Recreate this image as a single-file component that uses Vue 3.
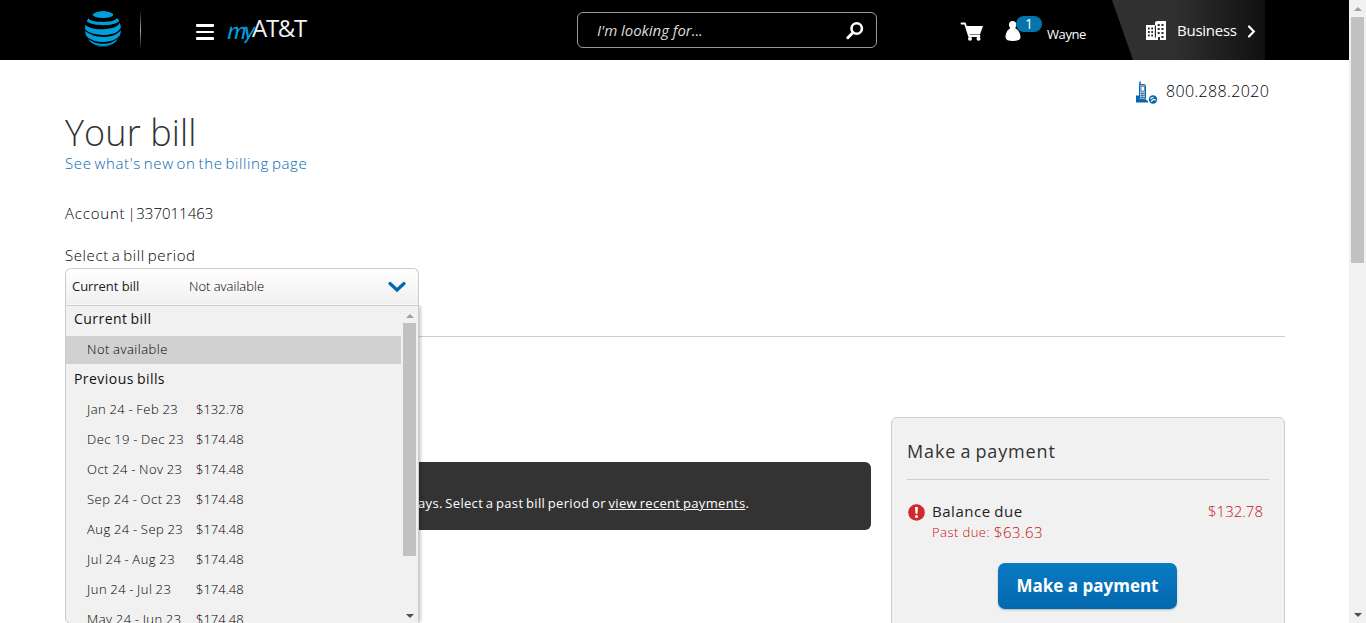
<script setup>
const bills = [
  ['Jan 24 - Feb 23', '$132.78'],
  ['Dec 19 - Dec 23', '$174.48'],
  ['Oct 24 - Nov 23', '$174.48'],
  ['Sep 24 - Oct 23', '$174.48'],
  ['Aug 24 - Sep 23', '$174.48'],
  ['Jul 24 - Aug 23', '$174.48'],
  ['Jun 24 - Jul 23', '$174.48'],
  ['May 24 - Jun 23', '$174.48'],
]
</script>

<template>
  <div class="window">
    <div class="page">
      <header class="top">
        <svg class="globe" width="38" height="38" viewBox="0 0 38 38">
          <defs><clipPath id="ball"><circle cx="19" cy="19" r="18" /></clipPath></defs>
          <g clip-path="url(#ball)" fill="#009fdb">
            <ellipse cx="19" cy="4.500" rx="10.500" ry="3.500" />
            <path d="M5 7C3.500 9.500 8 11.300 15 11.800C25 12.500 34 10.500 33 7L38 7L35 11.500C29 16.500 9 16.300 3 11.500L2 8Z" />
            <path d="M0 13C2 17.500 10 19.600 19 19.200C28 18.900 35 16.500 36 12L38 15C36 21.500 30 24.500 21 24.900C12 25.300 3 22.500 0 18Z" />
            <path d="M0 20C6 25.500 13 27.300 21 26.900C29 26.500 35 23.500 38 18.500L37 24C33 29.500 28 31.500 20 32C12 32.300 5 29.500 1 25Z" />
            <path d="M4 28.500C9 33 15 34 21 33.700C27 33.500 32 31 35 27L32 32C27 35.500 22 36.200 18 36C12 35.700 8 34 5 31Z" />
            <path d="M9 34.500C14 37.300 24 37.500 29 34.500L27 37Q19 39 11 37Z" />
          </g>
        </svg>
        <i class="rule" />
        <div class="burger"><i /><i /><i /></div>
        <div class="brand"><span class="my">my</span><span class="att">AT&amp;T</span></div>
        <div class="search">
          <span>I'm looking for...</span>
          <svg width="20" height="20" viewBox="0 0 20 20" fill="none" stroke="#fff">
            <circle cx="11.700" cy="8.500" r="5.200" stroke-width="2.600" />
            <path d="M8 12.500L2.800 17.700" stroke-width="3" stroke-linecap="round" />
          </svg>
        </div>
        <svg class="cart" width="24" height="20" viewBox="0 0 24 20">
          <path d="M1.500 1.500H5L9 14H19.500" fill="none" stroke="#fff" stroke-width="1.800" stroke-linecap="round" stroke-linejoin="round" />
          <path d="M6 4H23L20 12.500H8.500Z" fill="#fff" />
          <circle cx="10" cy="16.700" r="2" fill="#fff" /><circle cx="18.500" cy="16.700" r="2" fill="#fff" />
        </svg>
        <div class="user">
          <svg width="16" height="21" viewBox="0 0 16 21" fill="#fff">
            <path d="M7.500 0C10 0 11.500 1.500 11.300 4C11.200 5.500 10 7 10.500 7.500C14 9 15.500 13 15.500 16.500Q15 20 8 20Q1 20 .5 16.500C.5 13 2 9 5 7.500C5.500 7 4 5.500 3.900 4C3.800 1.500 5.300 0 7.500 0Z" />
          </svg>
          <b class="badge">1</b>
        </div>
        <span class="name">Wayne</span>
        <div class="business">
          <svg width="21" height="20" viewBox="0 0 21 20">
            <path d="M0 4H9V1L11 0H20V19H14V16H12V19H0Z" fill="#fff" />
            <path d="M2 6.500h1.700v2H2zM5.300 6.500H7v2H5.300zM2 10h1.700v2H2zM5.300 10H7v2H5.300zM2 13.500h1.700v2H2zM5.300 13.500H7v2H5.300zM8.800 4.500h1.200v12h-1.200zM11.700 3h2v2h-2zM15.500 3h2v2h-2zM11.700 7h2v2h-2zM15.500 7h2v2h-2zM11.700 11h2v2h-2zM15.500 11h2v2h-2zM15.500 15h2v2h-2z" fill="#292929" />
          </svg>
          <span>Business</span>
          <svg class="chev" width="9" height="14" viewBox="0 0 9 14"><path d="M2 2.500L6.800 7.500L2 12.500" fill="none" stroke="#fff" stroke-width="2.200" stroke-linecap="round" /></svg>
        </div>
      </header>

      <main>
        <div class="phone">
          <svg width="23" height="23" viewBox="0 0 23 23">
            <path d="M1 14.500H4V18H10L13 20V21.500H1V18Z" fill="#0568ae" />
            <path d="M4.500 5Q4.500 3.500 6 3.500H9.500Q10.500 3.500 10.500 5V17Q10.500 18.500 7.500 18.500Q4.500 18.500 4.500 17Z" fill="#b9b3c4" stroke="#0568ae" />
            <path d="M5 .5V4" stroke="#0568ae" stroke-width="1.500" />
            <path d="M6 5.500H9.500V10H6Z" fill="#fff" stroke="#1772b6" stroke-width=".7" />
            <path d="M6 12.500h3.500M6 14.500h3.500M6 16.500h3.500" stroke="#0568ae" stroke-dasharray="1 .3" />
            <circle cx="18" cy="18.500" r="4.200" fill="#0568ae" />
            <path d="M16 20.500L18.500 18.500L21 19M15.500 18Q16.500 16.300 18.500 16.300" stroke="#fff" stroke-width="1.200" fill="none" />
          </svg>
          <span>800.288.2020</span>
        </div>
        <h1>Your bill</h1>
        <a class="new">See what's new on the billing page</a>
        <p class="account"><span>Account</span><span>|</span><span class="number">337011463</span></p>
        <p class="label">Select a bill period</p>
        <div class="picker">
          <div class="selected">
            <span class="cur">Current bill</span><span class="na">Not available</span>
            <svg width="18" height="12" viewBox="0 0 18 12"><path d="M2 2.500L9 9L16 2.500" fill="none" stroke="#0568ae" stroke-width="3.200" stroke-linecap="round" /></svg>
          </div>
          <div class="menu">
            <div class="options">
              <div class="group">Current bill</div>
              <div class="option active"><span class="period">Not available</span></div>
              <div class="group prev">Previous bills</div>
              <div v-for="b in bills" :key="b[0]" class="option"><span class="period">{{ b[0] }}</span><span class="amount">{{ b[1] }}</span></div>
            </div>
            <div class="bar inner"><i class="up" /><i class="thumb" /><i class="down" /></div>
          </div>
        </div>
        <hr />
        <div class="columns">
          <div class="notice"><p>ays. Select a past bill period or <u>view recent payments</u>.</p></div>
          <section class="pay">
            <h2>Make a payment</h2>
            <div class="balance">
              <svg width="17" height="17" viewBox="0 0 17 17"><circle cx="8.500" cy="8.500" r="8.300" fill="#cf2a2a" /><path d="M7 3H10L9.500 9.800H7.500Z" fill="#fff" /><circle cx="8.500" cy="12.500" r="1.500" fill="#fff" /></svg>
              <div class="due"><div class="bd">Balance due</div><div class="past"><span>Past due:</span> <em>$63.63</em></div></div>
              <span class="total">$132.78</span>
            </div>
            <button>Make a payment</button>
          </section>
        </div>
      </main>
    </div>
    <div class="bar outer"><i class="up" /><i class="thumb" /><i class="down" /></div>
  </div>
</template>

<style>
html, body { margin: 0; overflow: hidden; }
</style>

<style scoped>
* { box-sizing: border-box; }
.window { display: flex; width: 1366px; height: 623px; overflow: hidden; background: #fff; color: #000; font-family: "Open Sans", "Noto Sans", sans-serif; font-weight: 300; white-space: nowrap; }
.page { width: 1349px; }
svg { display: block; flex: none; }
h1, h2, p { margin: 0; font-weight: inherit; }

.top { height: 60px; background: #000; display: flex; align-items: flex-start; color: #fff; font-weight: 400; }
.globe { margin: 10px 0 0 84px; }
.rule { width: 1px; height: 36px; margin: 12px 0 0 18px; background: linear-gradient(#111, #aaa 50%, #111); }
.burger { width: 18px; margin: 24px 0 0 55px; display: flex; flex-direction: column; gap: 4px; }
.burger i { height: 2.500px; border-radius: 1px; background: #fff; }
.brand { width: 80px; margin: 11px 0 0 14px; display: flex; height: 36px; line-height: 33px; }
.my { width: 24px; font: italic 400 24px/37px "Lato", sans-serif; color: #009fdb; letter-spacing: -2.500px; transform: skewX(-6deg); }
.att { font-size: 24px; letter-spacing: -1.300px; color: #f2f2f2; }
.search { width: 300px; height: 36px; margin: 12px 0 0 269px; padding: 0 11px 0 19px; border: 1px solid #999; border-radius: 6px; display: flex; align-items: center; justify-content: space-between; font-size: 15px; font-style: italic; color: #ddd; letter-spacing: -.05px; }
.cart { margin: 22px 0 0 83px; }
.user { position: relative; margin: 21px 0 0 21px; }
.badge { position: absolute; left: 11px; top: -5px; width: 26px; height: 16px; border-radius: 8px; background: #0574ac; font: 400 14px/16px "Open Sans", sans-serif; text-align: center; }
.name { width: 40px; margin: 25px 0 0 26px; font-size: 13px; line-height: 18px; letter-spacing: -.4px; }
.business { width: 153px; height: 60px; margin-left: 25px; display: flex; align-items: center; padding: 1px 0 0 34px; background: linear-gradient(90deg, #303030 40%, #101010); clip-path: polygon(0 0, 100% 0, 100% 100%, 21px 100%); font-size: 15px; letter-spacing: -.25px; }
.business span { width: 60px; margin: -2px 0 0 10px; }
.chev { margin-left: 10px; }

main { padding: 0 64px 0 65px; }
.phone { display: flex; justify-content: flex-end; height: 50px; padding: 21px 16px 0 0; gap: 8px; }
.phone span { width: 103px; font-size: 16px; line-height: 20px; letter-spacing: .35px; }
h1 { height: 44px; font-size: 36px; line-height: 46px; color: #333; letter-spacing: .1px; }
.new { display: block; height: 20px; line-height: 18px; font-size: 15px; color: #0568ae; letter-spacing: .62px; word-spacing: -1.500px; }
.account { display: flex; gap: 3px; margin-top: 30px; font-size: 15px; line-height: 18px; height: 20px; letter-spacing: .8px; }
.account span:nth-child(2) { margin-left: -1px; }
.account .number { letter-spacing: 0; margin-left: -3px; }
.label { margin-top: 22px; font-size: 15px; line-height: 18px; height: 22px; letter-spacing: .6px; word-spacing: -1.500px; }
.picker { position: relative; width: 354px; height: 68px; }
.selected { height: 38px; display: flex; align-items: center; padding: 0 12px 2px 6px; border: 1px solid #ccc; border-bottom: 0; border-radius: 6px 6px 0 0; background: linear-gradient(#fff, #f0f0f0 94%, #fff 95%); font-size: 13px; line-height: 18px; color: #222; }
.selected span { margin-top: -2px; }
.cur { width: 117px; font-weight: 400; letter-spacing: -.05px; }
.na { flex: 1; color: #000; }
.menu { position: absolute; z-index: 2; top: 37px; left: 0; width: 354px; height: 319px; border: 1px solid #ccc; border-radius: 0 0 6px 6px; background: #f1f1f1; display: flex; box-shadow: 2px 1px 3px rgba(0, 0, 0, .2); }
.options { width: 335px; height: 317px; overflow: hidden; }
.group { height: 30px; padding: 0 8px; font-size: 14px; line-height: 26px; font-weight: 400; letter-spacing: .45px; word-spacing: -1px; color: #111; }
.option { height: 30px; padding-left: 21px; display: flex; font-size: 13px; line-height: 26px; color: #000; }
.option.active { height: 28px; background: #d1d1d1; }
.prev { height: 32px; line-height: 30px; }
.period { width: 109px; letter-spacing: .5px; word-spacing: -.7px; }
.bar { display: flex; flex-direction: column; align-items: center; background: #f1f1f1; }
.bar i { flex: none; }
.up { width: 0; height: 0; border: 4px solid transparent; border-top: 0; border-bottom: 4px solid #a0a0a0; }
.down { width: 0; height: 0; border: 4px solid transparent; border-bottom: 0; border-top: 4px solid #505050; margin-top: auto; }
.thumb { width: 13px; background: #c1c1c1; margin-top: 5px; }
.inner { width: 17px; padding: 8px 2px 5px; }
.inner .thumb { height: 233px; }
.outer { width: 17px; height: 623px; padding: 7px 0 6px; }
.outer .thumb { height: 246px; margin-top: 6px; }

hr { height: 1px; margin: 0; border: 0; background: #ccc; }
.columns { display: flex; align-items: flex-start; justify-content: space-between; padding-top: 80px; }
.notice { width: 806px; height: 68px; margin-top: 45px; padding: 31px 0 0 353px; background: #333; border-radius: 6px; color: #fff; font-size: 13px; line-height: 20px; font-weight: 400; letter-spacing: .32px; word-spacing: -1px; }
.pay { width: 394px; height: 240px; padding: 0 15px; border: 1px solid #ccc; border-radius: 6px; background: #f1f1f1; }
h2 { height: 62px; line-height: 67px; border-bottom: 1px solid #ccc; font-size: 18px; font-weight: 400; letter-spacing: .85px; word-spacing: -1.300px; color: #333; }
.balance { display: flex; padding: 24px 6px 0 1px; }
.due { flex: 1; margin: -2px 0 0 7px; }
.bd { font-size: 15px; line-height: 18px; font-weight: 400; letter-spacing: .55px; word-spacing: -1px; color: #222; }
.past { color: #c81010; font-size: 13px; line-height: 20px; display: flex; gap: 4px; margin-top: 2px; letter-spacing: .45px; }
.past em { font-size: 15px; font-style: normal; }
.total { margin-top: -2px; font-size: 15px; line-height: 18px; color: #c81010; }
button { display: block; width: 179px; height: 46px; margin: 21px 0 0 91px; padding: 0; border: 0; border-radius: 7px; background: linear-gradient(#087bc3, #0568ae); box-shadow: 0 1px 2px rgba(0, 0, 0, .25); color: #fff; font: 700 17px/46px "Open Sans", sans-serif; }
</style>
